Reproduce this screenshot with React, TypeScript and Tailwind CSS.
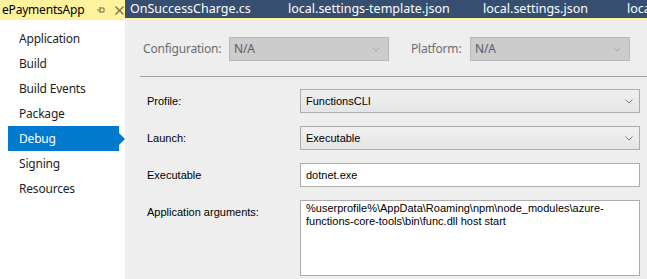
const tabs = [
  { name: "OnSuccessCharge.cs", w: "w-[158px]" },
  { name: "local.settings-template.json", w: "w-[195px]" },
  { name: "local.settings.json", w: "w-[144px]" },
  { name: "local.settings.json", w: "w-[60px]" },
]

const pages = ["Application", "Build", "Build Events", "Package", "Debug", "Signing", "Resources"]

const Chevron = ({ color = "#8a8a8a" }: { color?: string }) => (
  <svg width="8" height="5" viewBox="0 0 8 5" className="shrink-0">
    <path d="M0.5 0.5 L4 4 L7.5 0.5" fill="none" stroke={color} strokeWidth="1" />
  </svg>
)

const Select = ({ value }: { value: string }) => (
  <div className="flex items-center justify-between h-[24px] w-[340px] border border-[#acacac] bg-gradient-to-b from-[#f0f0f0] to-[#e5e5e5] pl-[5px] pr-[6px] text-[11px] text-black">
    <span>{value}</span>
    <Chevron color="#7a7a7a" />
  </div>
)

const Row = ({ label, children }: { label: string; children: React.ReactNode }) => (
  <div className="flex items-start">
    <div className="w-[175px] shrink-0 pl-[22px] text-[11px] text-black leading-[24px]">{label}</div>
    {children}
  </div>
)

const App = () => {
  return (
    <div className="w-[647px] h-[279px] overflow-hidden bg-[#eeeeee] font-['Noto_Sans',sans-serif]">
      {/* tab well */}
      <div className="flex h-[18px] bg-[#364e6f] text-[12px] leading-[18px] text-white whitespace-nowrap overflow-hidden">
        <div className="flex items-center w-[125px] shrink-0 h-[20px] bg-[#fff29d] text-black pl-[2px] overflow-hidden">
          <span className="tracking-[-0.2px]">ePaymentsApp</span>
          <svg width="10" height="10" viewBox="0 0 10 10" className="ml-[12px] shrink-0">
            <path d="M1 5 H4 M4 2 V8 M4 3 H8 V7 H4" fill="none" stroke="#6b6b57" strokeWidth="1" />
          </svg>
          <svg width="9" height="9" viewBox="0 0 9 9" className="ml-[9px] shrink-0">
            <path d="M0.5 0.5 L8.5 8.5 M8.5 0.5 L0.5 8.5" stroke="#6b6b57" strokeWidth="1.2" />
          </svg>
        </div>
        {tabs.map((t, i) => (
          <div key={i} className={`${t.w} shrink-0 pl-[5px] text-[12.5px] overflow-hidden`}>
            {t.name}
          </div>
        ))}
      </div>
      <div className="h-[2px] bg-[#fff29d]" />

      <div className="flex h-[259px]">
        {/* sidebar */}
        <div className="w-[125px] shrink-0 bg-white pt-[6px]">
          {pages.map((p) => (
            <div key={p} className="h-[25px] flex items-center">
              {p === "Debug" ? (
                <>
                  <div className="ml-[8px] w-[111px] h-[25px] bg-[#007acc] text-white pl-[11px] flex items-center text-[12px] tracking-[-0.2px]">
                    {p}
                  </div>
                  <div className="w-0 h-0 border-y-[6px] border-y-transparent border-l-[6px] border-l-[#007acc]" />
                </>
              ) : (
                <span className="pl-[19px] text-[12px] text-[#1e1e1e] tracking-[-0.2px]">{p}</span>
              )}
            </div>
          ))}
        </div>

        {/* property page */}
        <div className="flex-1 flex flex-col">
          <div className="flex items-end h-[56px] pb-[15px] pl-[18px] text-[12px] text-[#6d6d6d] tracking-[-0.2px]">
            <div className="flex items-center h-[24px]">
              <span className="w-[86px]">Configuration:</span>
              <div className="flex items-center justify-between w-[160px] h-[24px] border border-[#b9b9b9] bg-[#cccccc] pl-[4px] pr-[8px] text-[#5b5b6b]">
                <span>N/A</span>
                <Chevron color="#a8a8a8" />
              </div>
              <span className="ml-[22px] w-[59px]">Platform:</span>
              <div className="flex items-center justify-between w-[160px] h-[24px] border border-[#b9b9b9] bg-[#cccccc] pl-[4px] pr-[8px] text-[#5b5b6b]">
                <span>N/A</span>
                <Chevron color="#a8a8a8" />
              </div>
            </div>
          </div>
          <div className="ml-[15px] h-[1px] bg-[#a0a0a0]" />

          <div className="flex flex-col gap-[13px] pt-[12px] font-['Liberation_Sans',Arial,sans-serif]">
            <Row label="Profile:">
              <Select value="FunctionsCLI" />
            </Row>
            <Row label="Launch:">
              <Select value="Executable" />
            </Row>
            <Row label="Executable">
              <div className="flex items-center h-[24px] w-[340px] border border-[#acacac] bg-white pl-[5px] text-[11px] text-black">
                dotnet.exe
              </div>
            </Row>
            <Row label="Application arguments:">
              <div className="h-[76px] w-[340px] border border-[#acacac] bg-white px-[5px] pt-[1px] text-[11px] leading-[13px] text-black">
                %userprofile%\AppData\Roaming\npm\node_modules\azure-
                <br />
                functions-core-tools\bin\func.dll host start
              </div>
            </Row>
          </div>
        </div>
      </div>
    </div>
  )
}

export default App
